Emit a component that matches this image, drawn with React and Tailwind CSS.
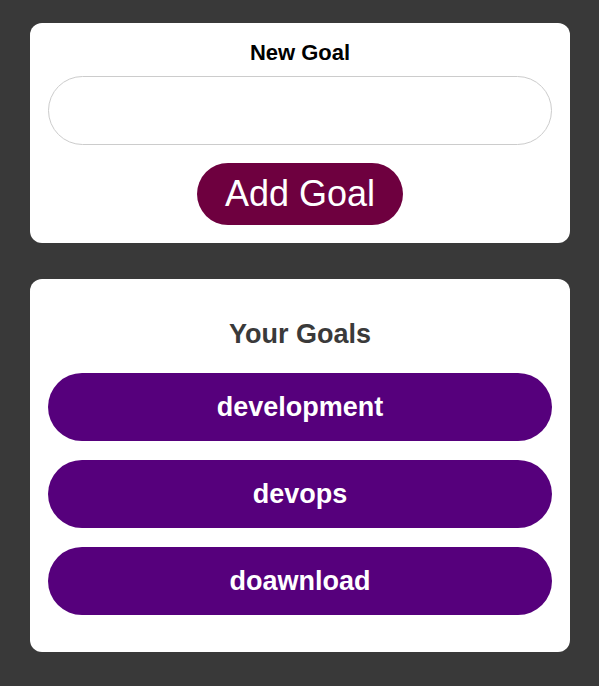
import React, { useState } from "react";

const App = () => {
  const [goals] = useState(["development", "devops", "doawnload"]);
  const [text, setText] = useState("");

  return (
    <div className="min-h-screen bg-[#393939] pl-[30px] pr-[29px] pt-[23px] pb-[34px] font-['Liberation_Sans',Arial,sans-serif]">
      <section className="bg-white rounded-[12px] px-[18px] pt-[18px] pb-[18px] flex flex-col items-center">
        <label className="text-[22px] leading-[24px] font-bold text-black">
          New Goal
        </label>
        <input
          value={text}
          onChange={(e) => setText(e.target.value)}
          className="mt-[11px] w-full h-[69px] rounded-full border border-[#cccccc] px-6 text-xl outline-none"
        />
        <button className="mt-[18px] h-[62px] px-[28px] rounded-full bg-[#6e003f] text-white text-[36px] leading-none">
          Add Goal
        </button>
      </section>

      <section className="mt-[36px] bg-white rounded-[12px] px-[18px] pt-[40px] pb-[37px]">
        <h2 className="text-center text-[27px] leading-[30px] font-bold text-[#3a3a3a]">
          Your Goals
        </h2>
        <ul className="mt-[24px] flex flex-col gap-[19px]">
          {goals.map((g) => (
            <li
              key={g}
              className="h-[68px] rounded-full bg-[#56007c] text-white text-[27px] font-bold flex items-center justify-center"
            >
              {g}
            </li>
          ))}
        </ul>
      </section>
    </div>
  );
};

export default App;
